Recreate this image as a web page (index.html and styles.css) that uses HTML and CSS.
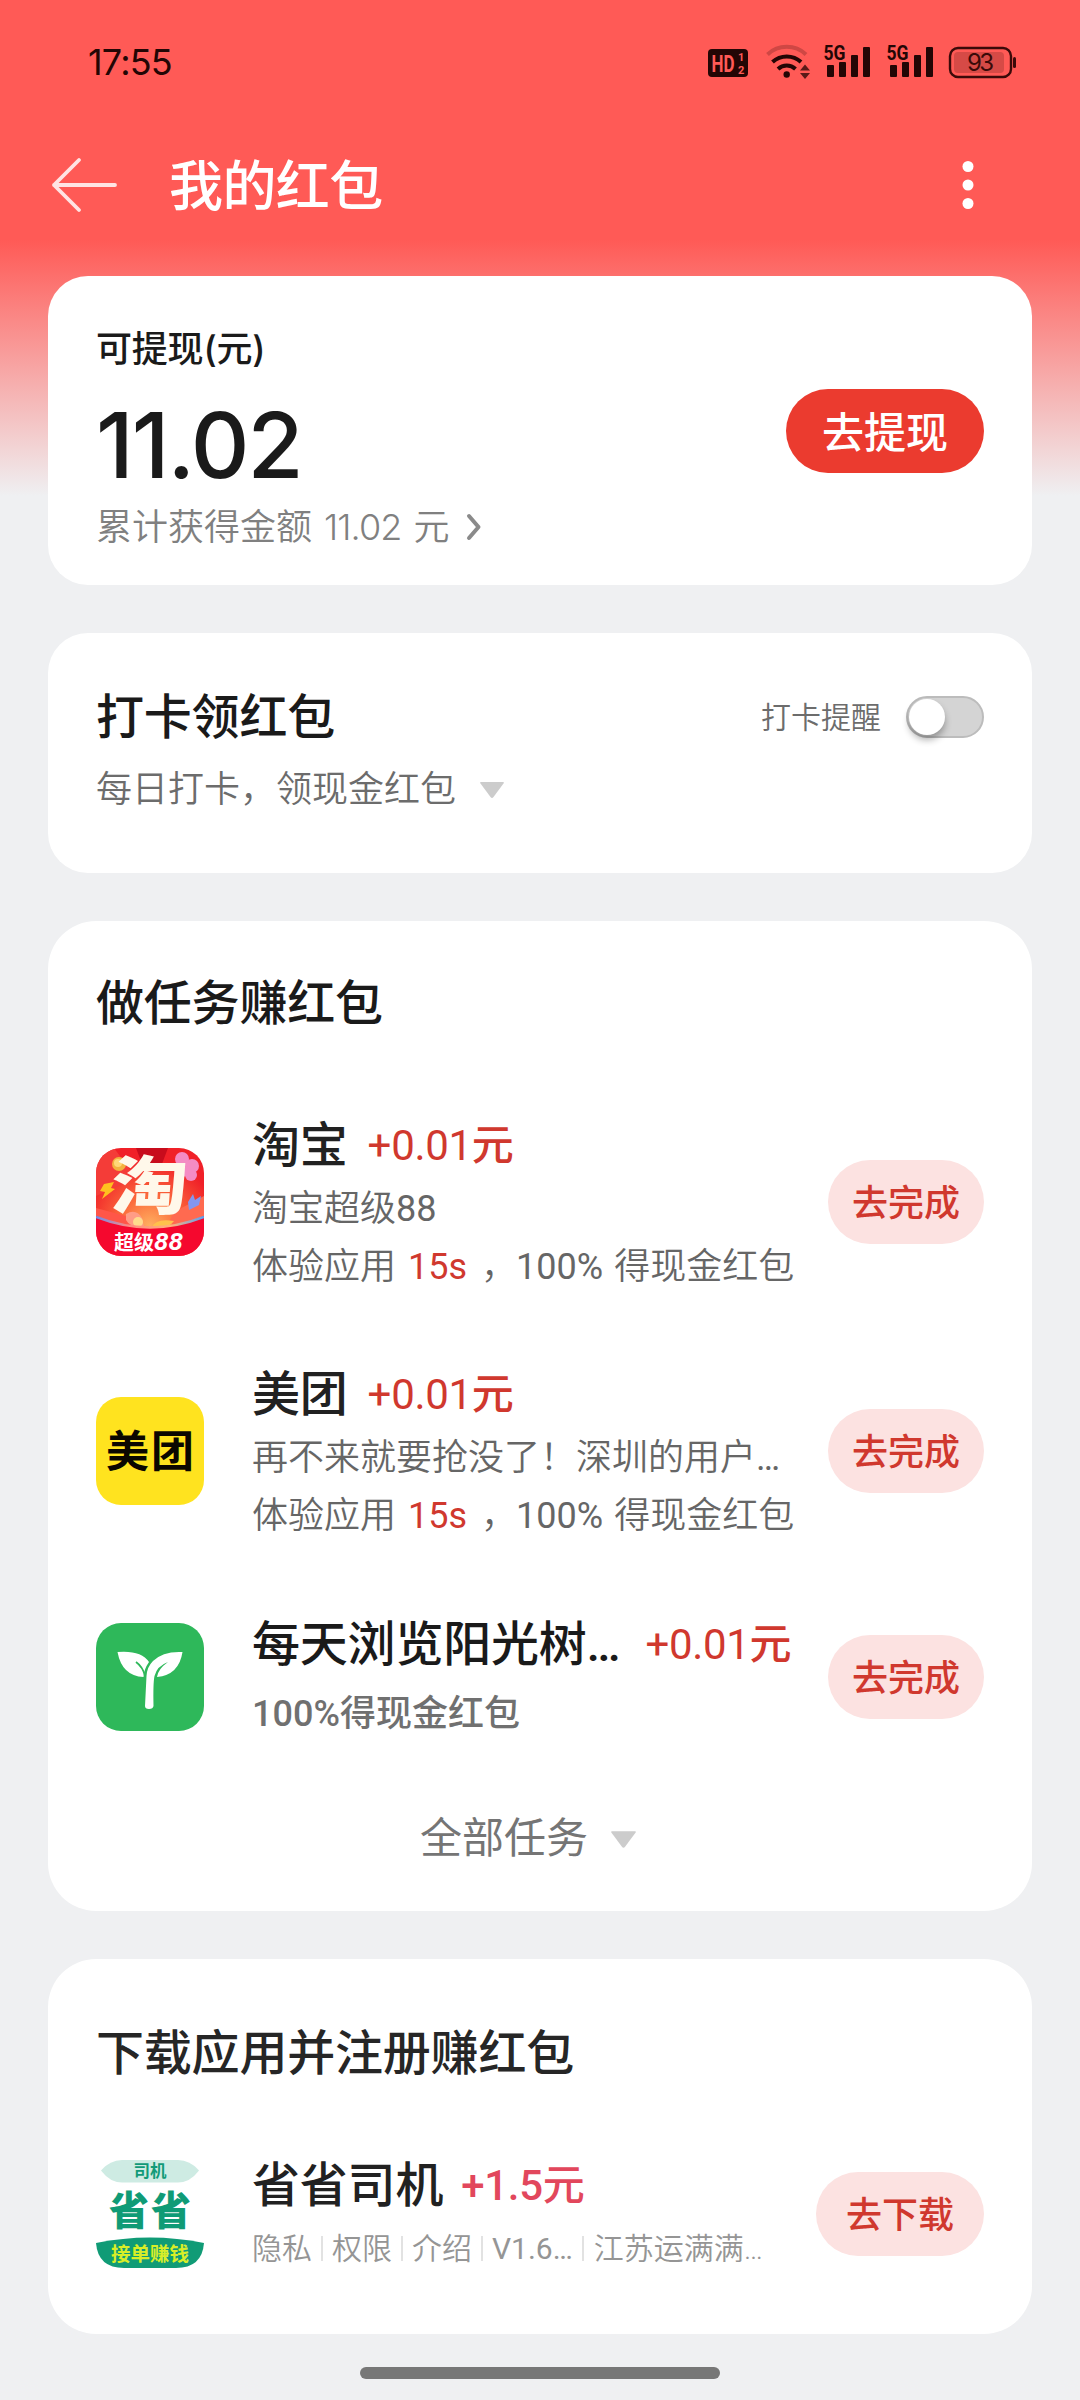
FILE: index.html
```html
<!DOCTYPE html>
<html lang="zh-CN">
<head>
<meta charset="utf-8">
<title>我的红包</title>
<link rel="stylesheet" href="styles.css">
</head>
<body>
<div class="screen">
  <header class="status">
    <span class="clock">17:55</span>
    <svg class="status-icons" width="320" height="44" viewBox="700 40 320 44">
      <rect x="708" y="49" width="40" height="28" rx="4" fill="#230605"/>
      <text class="hd" x="711.500" y="71.500" textLength="23" lengthAdjust="spacingAndGlyphs">HD</text>
      <text class="hd-num" x="738" y="61">1</text>
      <text class="hd-num" x="738" y="74">2</text>
      <g fill="none" stroke="#230605" stroke-width="4">
        <path d="M767.500 54.500A28 28 0 0 1 806 54.500" opacity=".22"/>
        <path d="M772.500 62A21 21 0 0 1 801 62"/>
        <path d="M778 69A13 13 0 0 1 795.500 69"/>
      </g>
      <circle cx="786.700" cy="74.500" r="3.200" fill="#230605"/>
      <path d="M800 70.500L805 64.500L810 70.500ZM800 73L805 79L810 73Z" fill="#5a1a18"/>
      <g id="signal" fill="#230605">
        <text class="net" x="823.500" y="60" textLength="22" lengthAdjust="spacingAndGlyphs">5G</text>
        <rect x="827" y="65" width="7" height="12" rx="1"/>
        <rect x="839" y="62" width="7" height="15" rx="1"/>
        <rect x="851" y="55" width="7" height="22" rx="1"/>
        <rect x="863" y="47" width="7" height="30" rx="1"/>
      </g>
      <use href="#signal" x="63"/>
      <rect x="950" y="48" width="61" height="29" rx="8" fill="none" stroke="#3b0a09" stroke-width="2.400"/>
      <rect x="954" y="52" width="50" height="21" rx="4" fill="#5a1a18" opacity=".25"/>
      <rect x="1013" y="57" width="3" height="11" rx="1.500" fill="#3b0a09"/>
      <text class="battery" x="967" y="71" textLength="27">93</text>
    </svg>
  </header>

  <nav class="topbar">
    <svg class="back" width="68" height="60" viewBox="0 0 68 60">
      <path d="M29 5L4 30L29 55M4 30H65" fill="none" stroke="#fff" stroke-opacity=".84" stroke-width="3.800" stroke-linecap="round" stroke-linejoin="round"/>
    </svg>
    <h1>我的红包</h1>
    <svg class="more" width="12" height="50" viewBox="0 0 12 50" fill="#fff">
      <circle cx="6" cy="6.500" r="5.500"/><circle cx="6" cy="25" r="5.500"/><circle cx="6" cy="43.500" r="5.500"/>
    </svg>
  </nav>

  <main>
    <section class="card balance">
      <div>
        <div class="label">可提现(元)</div>
        <div class="amount">11.02</div>
        <div class="total"><span>累计获得金额</span><span class="total-num">11.02</span><span>元</span>
          <svg width="16" height="28" viewBox="0 0 16 28"><path d="M3 3L12.500 14L3 25" fill="none" stroke="#8a8a8a" stroke-width="4" stroke-linecap="round" stroke-linejoin="round"/></svg>
        </div>
      </div>
      <button class="btn primary">去提现</button>
    </section>

    <section class="card checkin">
      <div class="row">
        <h2>打卡领红包</h2>
        <span class="remind">打卡提醒</span>
        <span class="toggle"><i></i></span>
      </div>
      <div class="hint">每日打卡，领现金红包
        <svg width="24" height="16" viewBox="0 0 24 16"><path d="M1 0H23Q24.500 0 23.500 1.500L13.500 15Q12 16.800 10.500 15L.5 1.500Q-.5 0 1 0Z" fill="#ccc"/></svg>
      </div>
    </section>

    <section class="card tasks">
      <h2>做任务赚红包</h2>

      <article class="task">
        <svg class="icon" width="108" height="108" viewBox="0 0 108 108">
          <defs>
            <clipPath id="tile"><rect width="108" height="108" rx="25"/></clipPath>
            <radialGradient id="glow" cx=".5" cy=".72" r=".62"><stop offset="0" stop-color="#ffb060"/><stop offset=".45" stop-color="#fb6a3c"/><stop offset="1" stop-color="#f02028"/></radialGradient>
            <linearGradient id="rim"><stop offset="0" stop-color="#6e8bea"/><stop offset=".3" stop-color="#ff8a80"/><stop offset=".7" stop-color="#ffb27a"/><stop offset="1" stop-color="#5aa0f2"/></linearGradient>
          </defs>
          <g clip-path="url(#tile)">
            <rect width="108" height="108" fill="url(#glow)"/>
            <path d="M0 0H18L40 30L0 48Z" fill="#f43c38"/>
            <path d="M40 0H72L66 16H46Z" fill="#c80c1c"/>
            <path d="M0 60L30 68L44 80H0Z" fill="#ff5648"/>
            <path d="M108 48L78 64L70 80H108Z" fill="#ff6a50"/>
            <circle cx="23" cy="16" r="7" fill="#f3b23f"/><circle cx="22" cy="15" r="4" fill="#ffd777"/>
            <g fill="#f48bc4"><circle cx="86" cy="11" r="7"/><circle cx="96" cy="18" r="7"/><circle cx="95" cy="27" r="6"/><circle cx="86" cy="22" r="7"/></g>
            <path d="M8 36L18 34L15 40L19 41L6 51L9 44L4 43Z" fill="#ffbf1f"/>
            <path d="M92 54L97 46L99 52L105 48L103 57L93 62Z" fill="#8396f0"/>
            <path d="M30 66Q40 60 46 70L48 79Q34 80 30 72Z" fill="#ff9c86"/><circle cx="42" cy="74" r="5" fill="#ffdb8d"/>
            <path d="M56 79Q60 70 78 73Q72 82 56 80Z" fill="#ffc14c"/>
            <path d="M0 68Q54 90 108 68V108H0Z" fill="#f5082e"/>
            <path d="M0 69Q54 90 108 69" fill="none" stroke="url(#rim)" stroke-width="2.500"/>
          </g>
          <text class="tao" x="0" y="0" transform="translate(14 61) skewX(-4)" textLength="76" lengthAdjust="spacingAndGlyphs">淘</text>
          <text class="tao-sub" x="18" y="102">超级</text>
          <text class="tao-eight" x="58" y="102" textLength="29" lengthAdjust="spacingAndGlyphs">88</text>
        </svg>
        <div class="info">
          <div class="head"><h3>淘宝</h3><span class="reward">+0.01元</span></div>
          <div class="desc">淘宝超级<span class="num">88</span></div>
          <div class="rule">体验应用<b>15s</b><span class="comma">，</span><span class="num">100%</span><span class="gain">得现金红包</span></div>
        </div>
        <button class="btn soft">去完成</button>
      </article>

      <article class="task">
        <svg class="icon" width="108" height="108" viewBox="0 0 108 108">
          <rect width="108" height="108" rx="25" fill="#ffe31f"/>
          <text class="mt" x="10" y="70" textLength="88">美团</text>
        </svg>
        <div class="info">
          <div class="head"><h3>美团</h3><span class="reward">+0.01元</span></div>
          <div class="desc">再不来就要抢没了！深圳的用户<span class="num">…</span></div>
          <div class="rule">体验应用<b>15s</b><span class="comma">，</span><span class="num">100%</span><span class="gain">得现金红包</span></div>
        </div>
        <button class="btn soft">去完成</button>
      </article>

      <article class="task compact">
        <svg class="icon" width="108" height="108" viewBox="0 0 108 108">
          <rect width="108" height="108" rx="25" fill="#2eb85a"/>
          <path d="M49 83L50.500 53Q51 44 57 38Q67 28 86.500 29Q83 52 61 54Q62 46 72 39Q61 43 58.500 53Q57 60 57.500 83Q57 86 53 86Q49 86 49 83Z" fill="#fff"/>
          <path d="M21.500 29Q45 27 53 39Q48 46 47.500 54Q26 53 21.500 29Z" fill="#fff"/>
          <path d="M40 39Q47 44 49 53" fill="none" stroke="#2eb85a" stroke-width="1.800"/>
        </svg>
        <div class="info">
          <div class="head"><h3>每天浏览阳光树…</h3><span class="reward">+0.01元</span></div>
          <div class="desc"><span class="num">100%</span>得现金红包</div>
        </div>
        <button class="btn soft">去完成</button>
      </article>

      <div class="all">全部任务
        <svg width="25" height="17" viewBox="0 0 24 16"><path d="M1 0H23Q24.500 0 23.500 1.500L13.500 15Q12 16.800 10.500 15L.5 1.500Q-.5 0 1 0Z" fill="#ccc"/></svg>
      </div>
    </section>

    <section class="card downloads">
      <h2>下载应用并注册赚红包</h2>
      <article class="task">
        <svg class="icon" width="108" height="108" viewBox="0 0 108 108">
          <path d="M5 10.500Q14 0 26 0H82Q94 0 103 10.500Q94 22.500 82 22.500H26Q14 22.500 5 10.500Z" fill="#ceebe3"/>
          <text class="sj" x="37.500" y="17">司机</text>
          <text class="ss" x="13" y="65" textLength="82">省省</text>
          <path d="M0 83Q54 72 108 83Q106 108 80 108H28Q2 108 0 83Z" fill="#109b76"/>
          <text class="jd" x="15" y="101" textLength="78">接单赚钱</text>
        </svg>
        <div class="info">
          <div class="head"><h3>省省司机</h3><span class="reward hot">+1.5元</span></div>
          <div class="meta"><span>隐私</span><span>权限</span><span>介绍</span><span class="num">V1.6…</span><span>江苏运满满…</span></div>
        </div>
        <button class="btn soft wide">去下载</button>
      </article>
    </section>
  </main>
  <div class="home-bar"></div>
</div>
</body>
</html>
```
FILE: styles.css
```css
* { box-sizing: border-box; }

body {
  margin: 0;
  background: #eff0f2;
  color: #1a1a1a;
  font-family: Roboto, "Noto Sans CJK SC", sans-serif;
}

h1, h2, h3 { margin: 0; font-weight: 500; }

.screen {
  display: flex;
  flex-direction: column;
  width: 1080px;
  height: 2400px;
  overflow: hidden;
  background: linear-gradient(#ff5a56 0, #ff5a56 240px, #eff0f2 496px);
}

/* Status bar */
.status {
  display: flex;
  justify-content: space-between;
  align-items: flex-start;
  height: 124px;
  padding: 40px 60px 0 88px;
}
.clock {
  font: 400 36px/45px Inter, sans-serif;
  letter-spacing: -.8px;
  color: #230605;
}
.status-icons { display: block; }
.hd { font: bold 23px Roboto, sans-serif; fill: #ff5a56; }
.hd-num { font: bold 11px/1 Roboto, sans-serif; fill: #ff5a56; }
.net { font: bold 20px Roboto, sans-serif; }
.battery { font: 400 24px Inter, sans-serif; fill: #3b0a09; }

/* Title bar */
.topbar {
  display: flex;
  align-items: center;
  height: 122px;
  padding: 0 106px 0 50px;
}
.topbar h1 {
  flex: 1;
  margin-left: 51px;
  font-size: 54px;
  line-height: 72px;
  padding-top: 6px;
  letter-spacing: -.6px;
  color: #fff;
}

main {
  display: flex;
  flex-direction: column;
  gap: 48px;
  padding: 30px 48px 0;
}
.card {
  background: #fff;
  border-radius: 40px;
  padding: 0 48px;
}
h2 {
  padding-top: 2px;
  font-size: 48px;
  line-height: 64px;
  letter-spacing: -.2px;
}

.btn {
  flex: none;
  height: 84px;
  padding: 0 0 4px;
  border: 0;
  border-radius: 42px;
  font-family: inherit;
  font-weight: 500;
}
.btn.primary {
  width: 198px;
  padding-bottom: 2px;
  font-size: 42px;
  color: #fff;
  background: #eb3b2f;
}
.btn.soft {
  width: 156px;
  font-size: 36px;
  color: #d0382e;
  background: #fce2e1;
}
.btn.wide { width: 168px; }

/* Balance */
.balance {
  display: flex;
  justify-content: space-between;
  align-items: center;
  height: 309px;
  font-family: Inter, "Noto Sans CJK SC", sans-serif;
}
.label { font-size: 36px; line-height: 48px; margin-top: 15px; font-weight: 500; letter-spacing: -.2px; }
.amount {
  margin: 17px 0 3px;
  font-size: 91px;
  line-height: 110px;
  font-weight: 500;
  letter-spacing: -2px;
}
.total {
  display: flex;
  align-items: center;
  font-size: 36px;
  line-height: 48px;
  font-weight: 350;
  color: #808080;
}
.total-num { margin: 0 12px 0 12px; letter-spacing: -.9px; }
.total svg { margin-left: 17px; }

/* Check-in */
.checkin { height: 240px; padding-top: 51px; }
.row { display: flex; align-items: center; }
.row h2 { flex: 1; }
.remind {
  margin-right: 25px;
  padding-bottom: 5px;
  font-size: 30px;
  font-weight: 350;
  color: #6c6c6c;
}
.toggle {
  width: 78px;
  height: 42px;
  padding: 2px;
  border: 2px solid #bcbcbc;
  border-radius: 21px;
  background: #d4d4d4;
}
.toggle i {
  display: block;
  width: 36px;
  height: 36px;
  margin-top: -1px;
  margin-left: -1px;
  border-radius: 50%;
  background: #fff;
  box-shadow: 0 5px 7px rgba(0, 0, 0, .3);
}
.hint {
  display: flex;
  align-items: center;
  gap: 24px;
  margin-top: 16px;
  font-size: 36px;
  line-height: 48px;
  font-weight: 350;
  color: #6c6c6c;
}

/* Tasks */
.tasks, .downloads { border-radius: 48px; }
.tasks { height: 990px; padding-top: 49px; }
.tasks h2 { margin-bottom: 77px; }
.task { display: flex; align-items: center; }
.task + .task { margin-top: 71px; }
.task + .compact { margin-top: 68px; }
.icon { flex: none; display: block; margin-right: 48px; overflow: visible; }
.info { flex: 1; min-width: 0; white-space: nowrap; }
.head { display: flex; height: 64px; line-height: 66px; }
h3 { font-size: 48px; letter-spacing: -.2px; color: #212121; }
.reward {
  margin-left: 20px;
  font-size: 42px;
  font-weight: 450;
  letter-spacing: -.3px;
  color: #d0382e;
}
.num { font-weight: 400; }
.desc { font-size: 36px; line-height: 65px; font-weight: 350; color: #666; }
.rule { height: 49px; font-size: 36px; line-height: 51px; font-weight: 350; color: #666; }
.rule b { margin: 0 14px 0 12px; font-weight: 400; color: #d0382e; }
.comma { margin-right: -1px; }
.gain { margin-left: 11px; }
.compact .head { height: 72px; line-height: 74px; }
.compact .desc { height: 66px; line-height: 68px; font-weight: 500; color: #707070; }
.compact .num { font-weight: 500; }
.compact h3 { color: #1a1a1a; }
.compact .reward { margin-left: 25px; }
.all {
  display: flex;
  justify-content: center;
  align-items: center;
  gap: 23px;
  margin-top: 63px;
  padding-right: 24px;
  font-size: 42px;
  line-height: 60px;
  color: #757575;
}

/* Downloads */
.downloads { height: 375px; padding-top: 61px; }
.downloads h2 { margin-bottom: 66px; color: #262626; }
.downloads .head { height: 66px; line-height: 68px; }
.reward.hot { margin-left: 18px; font-weight: 500; color: #e2475c; }
.meta {
  display: flex;
  align-items: center;
  height: 58px;
  padding-top: 2px;
  font-size: 30px;
  font-weight: 350;
  color: #959595;
}
.meta span { line-height: 25px; }
.meta span + span { margin-left: 9px; padding-left: 9px; border-left: 2px solid #e2e2e2; }
.meta .num + span { padding-left: 10px; }

/* Lettering inside the app icons */
.tao { font: 900 64px "Noto Sans CJK SC", sans-serif; fill: #fff8ea; }
.tao-sub { font: bold 20px "Noto Sans CJK SC", sans-serif; fill: #fff; }
.tao-eight { font: italic bold 24px Roboto, sans-serif; fill: #fff; }
.mt { font: 700 43px "Noto Sans CJK SC", sans-serif; fill: #0b0700; }
.sj { font: bold 16.500px "Noto Sans CJK SC", sans-serif; fill: #129a78; }
.ss { font: 900 40px "Noto Sans CJK SC", sans-serif; fill: #109b76; }
.jd { font: bold 19.500px "Noto Sans CJK SC", sans-serif; fill: #d8ee28; }

.home-bar {
  width: 360px;
  height: 12px;
  margin: 33px auto 0;
  border-radius: 6px;
  background: #777;
}
```
